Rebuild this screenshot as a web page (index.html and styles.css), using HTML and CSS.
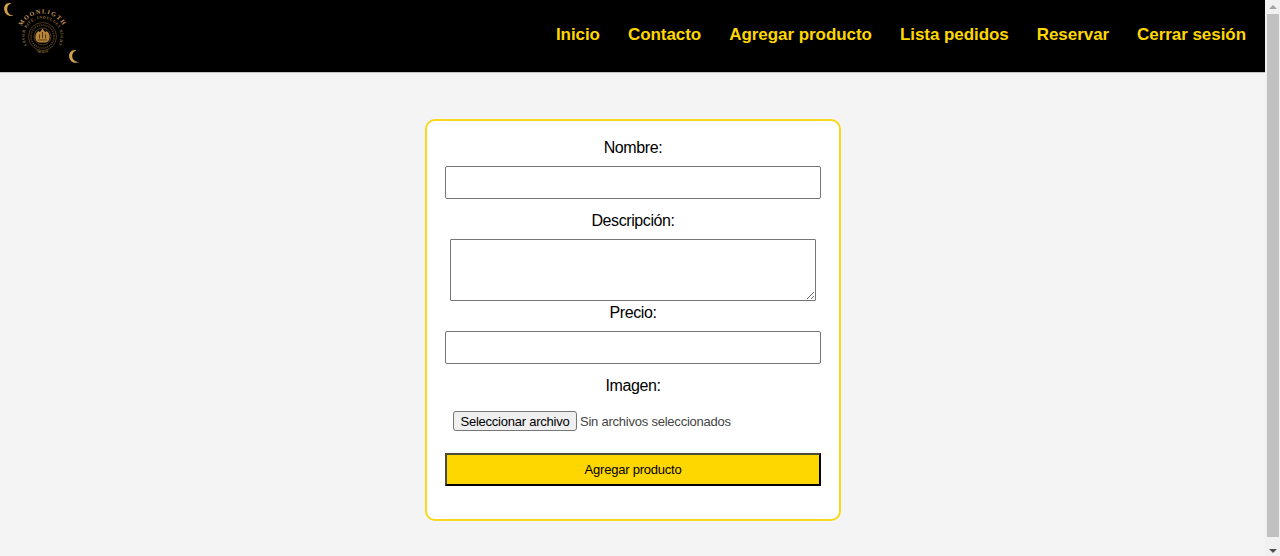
FILE: index.html
```html
<!DOCTYPE html>
<html lang="es">
<head>
<meta charset="utf-8">
<title>Agregar producto</title>
<link rel="stylesheet" href="styles.css">
</head>
<body>
<div class="page">
  <header class="header">
    <svg class="logo" viewBox="0 0 84 72" width="84" height="72">
      <defs>
        <path id="arc-name" d="M19.500 36.500a23 23 0 0 1 46 0"/>
        <path id="arc-motto" d="M31 50.200A17.900 17.900 0 1 1 54 50.200"/>
        <path id="arc-base" d="M26 43A18.500 18.500 0 0 0 59 43"/>
      </defs>
      <path class="moon" d="M11.5 3.2C6 2 3.5 6 4.3 10C5.1 14.500 9 17.100 13.500 15.400C10 15.500 7.300 13 7.200 9.300C7.100 6.400 8.500 4.200 11.500 3.200Z"/>
      <path class="moon" d="M76.500 50.200C71.500 49.200 68.800 53 69.100 56.500C69.500 61.300 74 64.300 79.500 62C75.500 62 72.400 60 72.200 56.200C72.100 53.500 73.500 51.300 76.500 50.200Z"/>
      <text class="name"><textPath href="#arc-name" startOffset="50%" text-anchor="middle">MOONLIGTH</textPath></text>
      <text class="motto"><textPath href="#arc-motto" startOffset="50%" text-anchor="middle">SAVOR BITE, INDULGES NIGHT</textPath></text>
      <text class="base"><textPath href="#arc-base" startOffset="50%" text-anchor="middle">· MOON ·</textPath></text>
      <circle class="ring" cx="42.500" cy="36.500" r="14"/>
      <circle class="ring dashed" cx="42.500" cy="36.500" r="11.500"/>
      <circle class="ring" cx="42.500" cy="36.500" r="8.500"/>
      <path class="emblem" d="M35.500 35Q37.500 29.500 40 32L42.500 28.500L45 32Q47.500 29.500 49.500 35Q50.500 41 46 42.500H39Q34.500 41 35.500 35Z"/>
      <path class="detail" d="M42.500 32v6M39.500 34.500v4M45.500 34.500v4M38 40h9"/>
    </svg>
    <nav class="nav">
      <a>Inicio</a><a>Contacto</a><a>Agregar producto</a><a>Lista pedidos</a><a>Reservar</a><a>Cerrar sesión</a>
    </nav>
  </header>
  <main class="main">
    <form class="card">
      <label class="label" for="nombre">Nombre:</label>
      <input class="field" id="nombre" type="text">
      <label class="label" for="descripcion">Descripción:</label>
      <textarea class="area" id="descripcion"></textarea>
      <label class="label after-area" for="precio">Precio:</label>
      <input class="field" id="precio" type="text">
      <label class="label">Imagen:</label>
      <div class="file">
        <button class="choose" type="button">Seleccionar archivo</button>
        <span>Sin archivos seleccionados</span>
      </div>
      <button class="submit" type="button">Agregar producto</button>
    </form>
  </main>
</div>
<div class="scrollbar">
  <svg width="15" height="14" viewBox="0 0 15 14"><path fill="#a3a3a3" d="M4 9L8 5L12 9Z"/></svg>
  <div class="thumb"></div>
  <svg width="15" height="17" viewBox="0 0 15 17"><path fill="#505050" d="M4 10H12L8 14Z"/></svg>
</div>
</body>
</html>
```
FILE: styles.css
```css
* { box-sizing: border-box; }

body {
  margin: 0;
  height: 556px;
  display: flex;
  overflow: hidden;
  background: #f4f4f4;
  font-family: "Liberation Sans", Arial, sans-serif;
  color: #000;
}

.page { flex: 1; }

.header {
  height: 73px;
  display: flex;
  justify-content: space-between;
  background: #000;
  border-bottom: 1px solid #c4c4c4;
}

.logo { display: block; }
.moon { fill: #d3a04e; }
.name, .motto, .base { font-family: "Liberation Serif", serif; font-weight: bold; }
.name { font-size: 6.2px; fill: #c3965a; letter-spacing: 1.2px; }
.motto { font-size: 4px; fill: #94703f; letter-spacing: .5px; }
.base { font-size: 3.6px; fill: #94703f; }
.ring { fill: none; stroke: #5e4523; stroke-width: .8; }
.dashed { stroke-width: 1.6; stroke-dasharray: 1 1; }
.emblem { fill: #b78339; }
.detail { fill: none; stroke: #39260d; stroke-width: .8; }

.nav {
  display: flex;
  gap: 28px;
  padding: 25px 19px 0 0;
  font-size: 17px;
  font-weight: bold;
  line-height: 20px;
  letter-spacing: -.055px;
  color: #ffd700;
}

.main { padding: 46px 0 0 425px; }

.card {
  width: 416px;
  height: 402px;
  padding: 18px 18px;
  display: flex;
  flex-direction: column;
  align-items: center;
  background: #fff;
  border: 2px solid #f8d71c;
  border-radius: 10px;
}

.label {
  font-size: 16px;
  line-height: 18px;
  letter-spacing: -.4px;
  margin-bottom: 9px;
}

.field {
  width: 376px;
  height: 33px;
  margin: 0 0 13px;
  border: 1px solid #767676;
  border-radius: 2px;
}

.area {
  width: 366px;
  height: 62px;
  margin: 0;
  border: 1px solid #767676;
  border-radius: 1px;
}

.after-area { margin-top: 3px; }

.file {
  align-self: stretch;
  display: flex;
  align-items: center;
  gap: 3px;
  margin: 7px 0 22px 8px;
  font-size: 13px;
  letter-spacing: -.23px;
  color: #444;
}

.choose {
  width: 124px;
  height: 20px;
  padding: 0;
  font: 13px "Liberation Sans", Arial, sans-serif;
  letter-spacing: -.23px;
  color: #000;
  background: #efefef;
  border: 1px solid #767676;
  border-radius: 3px;
}

.submit {
  width: 376px;
  height: 33px;
  padding: 0;
  font: 13px "Liberation Sans", Arial, sans-serif;
  letter-spacing: -.23px;
  color: #000;
  background: #ffd700;
  border: 2px solid;
  border-color: #4d4a3a #000 #000 #4d4a3a;
}

.scrollbar {
  width: 15px;
  display: flex;
  flex-direction: column;
  background: #f1f1f1;
}

.thumb {
  flex: 1;
  margin: 0 1px 2px 2px;
  background: #c1c1c1;
}
```
